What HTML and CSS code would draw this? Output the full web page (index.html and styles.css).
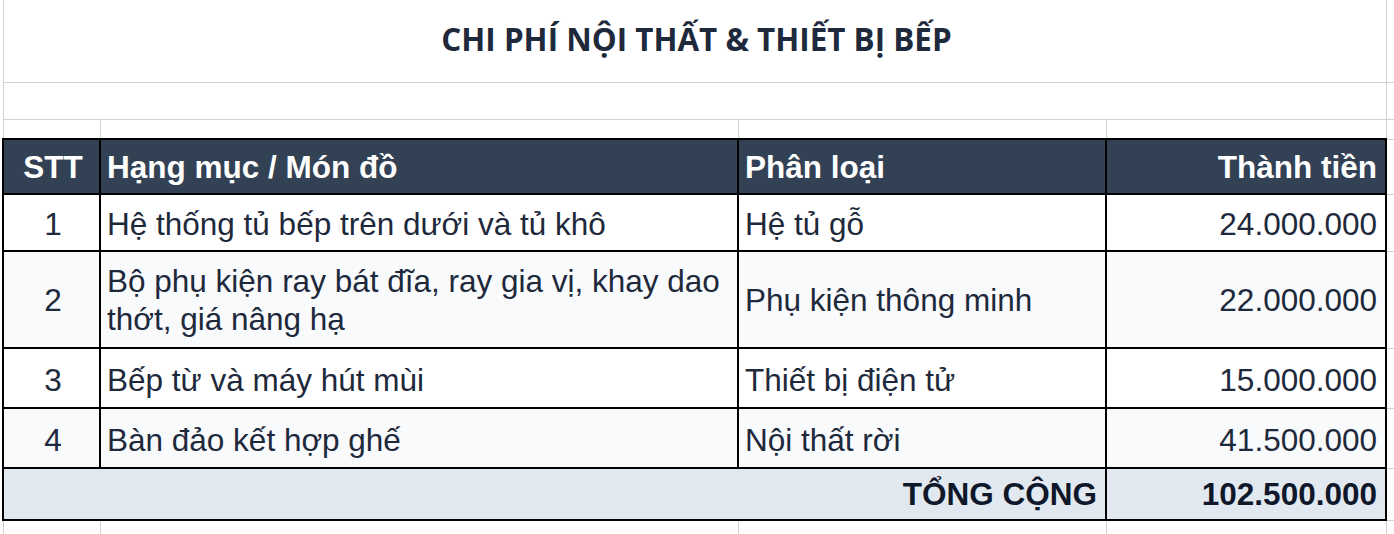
FILE: index.html
```html
<!DOCTYPE html>
<html lang="vi">
<head>
<meta charset="utf-8">
<title>Chi phí nội thất &amp; thiết bị bếp</title>
<link rel="stylesheet" href="styles.css">
</head>
<body>
<table class="sheet">
  <colgroup>
    <col class="col-a">
    <col class="col-b">
    <col class="col-c">
    <col class="col-d">
    <col class="col-e">
  </colgroup>
  <tr class="r-title">
    <td colspan="4" class="title">CHI PHÍ NỘI THẤT &amp; THIẾT BỊ BẾP</td>
    <td></td>
  </tr>
  <tr class="r-gap">
    <td colspan="4"></td>
    <td></td>
  </tr>
  <tr class="r-spacer">
    <td></td><td></td><td></td><td></td><td></td>
  </tr>
  <tr class="r-head">
    <th class="b center">STT</th>
    <th class="b left">Hạng mục / Món đồ</th>
    <th class="b left">Phân loại</th>
    <th class="b right">Thành tiền</th>
    <td></td>
  </tr>
  <tr class="r-row r-1">
    <td class="b center">1</td>
    <td class="b left">Hệ thống tủ bếp trên dưới và tủ khô</td>
    <td class="b left">Hệ tủ gỗ</td>
    <td class="b right">24.000.000</td>
    <td></td>
  </tr>
  <tr class="r-row r-2 alt">
    <td class="b center">2</td>
    <td class="b left">Bộ phụ kiện ray bát đĩa, ray gia vị, khay dao thớt, giá nâng hạ</td>
    <td class="b left">Phụ kiện thông minh</td>
    <td class="b right">22.000.000</td>
    <td></td>
  </tr>
  <tr class="r-row r-3">
    <td class="b center">3</td>
    <td class="b left">Bếp từ và máy hút mùi</td>
    <td class="b left">Thiết bị điện tử</td>
    <td class="b right">15.000.000</td>
    <td></td>
  </tr>
  <tr class="r-row r-4 alt">
    <td class="b center">4</td>
    <td class="b left">Bàn đảo kết hợp ghế</td>
    <td class="b left">Nội thất rời</td>
    <td class="b right">41.500.000</td>
    <td></td>
  </tr>
  <tr class="r-total">
    <td colspan="3" class="b right strong">TỔNG CỘNG</td>
    <td class="b right strong">102.500.000</td>
    <td></td>
  </tr>
  <tr class="r-after">
    <td></td><td></td><td></td><td></td><td></td>
  </tr>
</table>
</body>
</html>
```

FILE: styles.css
```css
html, body {
  margin: 0;
  padding: 0;
  overflow: hidden;
  background: #ffffff;
}

.sheet {
  border-collapse: collapse;
  table-layout: fixed;
  width: 1432px;
  margin-left: 2px;
  font-family: "Liberation Sans", Arial, sans-serif;
  font-size: 31.5px;
  color: #1e293b;
}

.col-a { width: 97px; }
.col-b { width: 638px; }
.col-c { width: 368px; }
.col-d { width: 280px; }
.col-e { width: 49px; }

.sheet td,
.sheet th {
  border: 1px solid #d2d2d2;
  padding: 0 8px 0 6px;
  vertical-align: middle;
  overflow: hidden;
  white-space: nowrap;
  line-height: 38px;
}

.r-title td { border-top: none; }

.r-title { height: 82px; }
.r-gap { height: 37px; }
.r-spacer { height: 20px; }
.r-head { height: 55px; }
.r-1 { height: 57px; }
.r-2 { height: 97px; }
.r-3 { height: 60px; }
.r-4 { height: 60px; }
.r-total { height: 52px; }
.r-after { height: 24px; }

.sheet .r-1 td,
.sheet .r-3 td,
.sheet .r-4 td {
  padding-top: 3px;
}

.sheet .title {
  text-align: center;
  font-family: "Open Sans", "Noto Sans", sans-serif;
  font-weight: 700;
  font-size: 31.4px;
  color: #1e293b;
  padding: 0 0 4px 4px;
}

.sheet .b {
  border: 2px solid #000000;
}

.sheet .b.center {
  padding-left: 3px;
  padding-right: 0;
}

.r-head th {
  background: #334155;
  color: #ffffff;
  font-weight: 700;
}

.r-2 td.b { white-space: normal; }

.alt td.b { background: #f8fafc; }

.r-total td.b {
  background: #e2e8f0;
  color: #0f172a;
}

.strong { font-weight: 700; }

.center { text-align: center; }
.left { text-align: left; }
.right { text-align: right; }
```
